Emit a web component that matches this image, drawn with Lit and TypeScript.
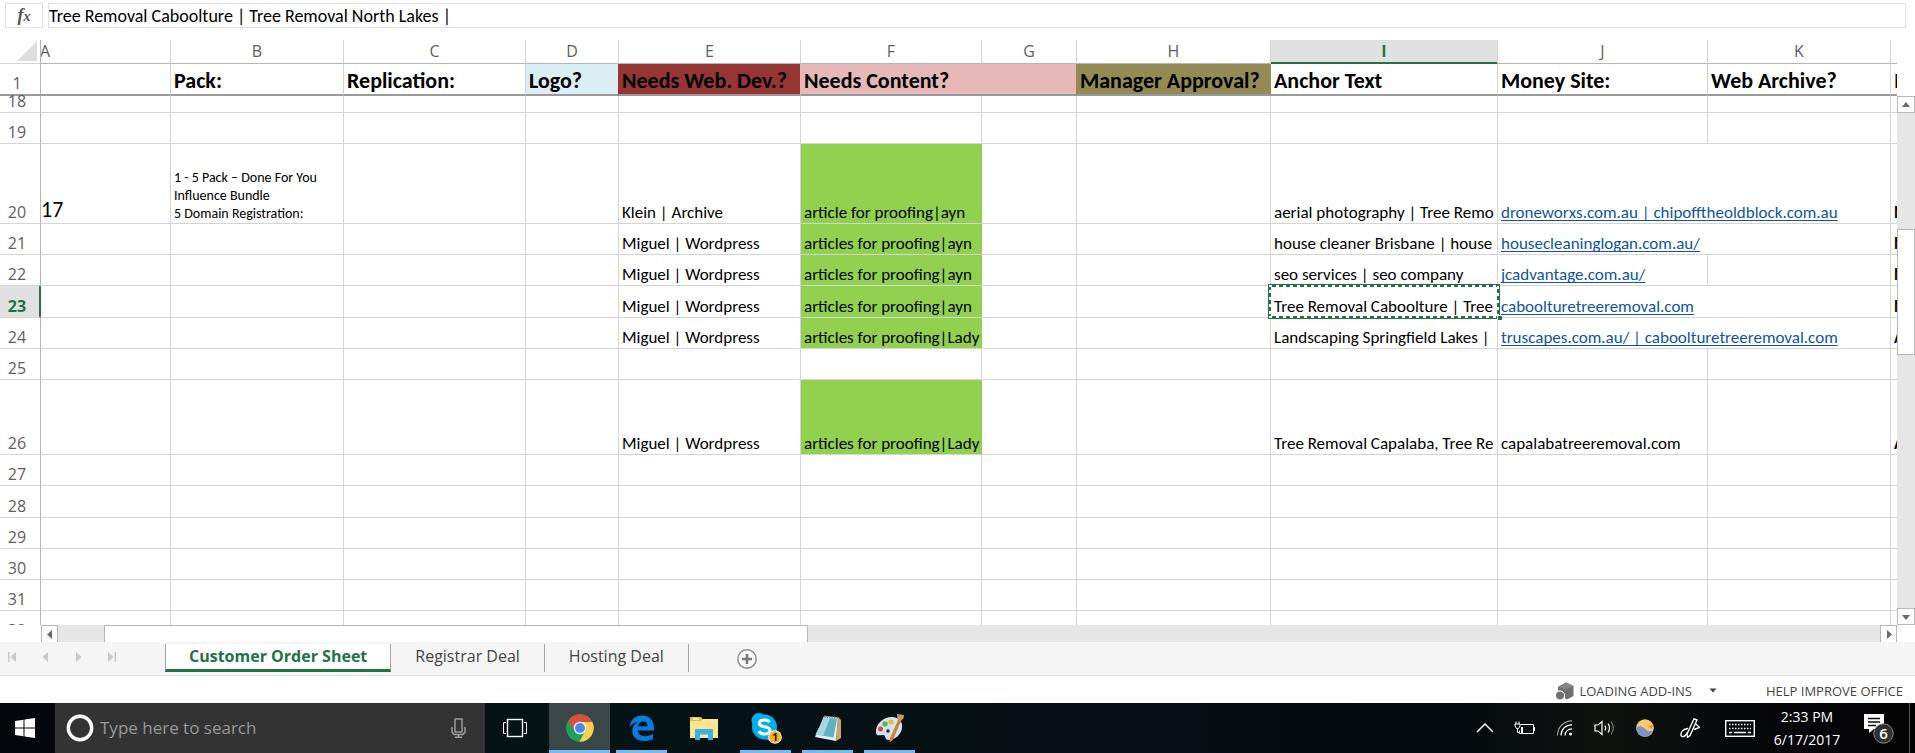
import { LitElement, html, css, nothing, svg } from "lit";
import { customElement, state } from "lit/decorators.js";
import { classMap } from "lit/directives/class-map.js";

interface Cell {
  text: string;
  fill?: string;
  link?: boolean;
  span?: number;
  small?: boolean;
  large?: boolean;
  bold?: boolean;
}

interface Row {
  n: number;
  height: number;
  cells: Record<string, Cell>;
}

const COLUMNS: { id: string; width: number }[] = [
  { id: "A", width: 130 },
  { id: "B", width: 173 },
  { id: "C", width: 182 },
  { id: "D", width: 93 },
  { id: "E", width: 182 },
  { id: "F", width: 181 },
  { id: "G", width: 95 },
  { id: "H", width: 194 },
  { id: "I", width: 227 },
  { id: "J", width: 210 },
  { id: "K", width: 183 },
  { id: "L", width: 183 },
];

const article = (text: string): Cell => ({ text, fill: "green" });
const miguel: Cell = { text: "Miguel | Wordpress" };

const ROWS: Row[] = [
  {
    n: 1,
    height: 32,
    cells: {
      B: { text: "Pack:" },
      C: { text: "Replication:" },
      D: { text: "Logo?", fill: "aqua" },
      E: { text: "Needs Web. Dev.?", fill: "red" },
      F: { text: "Needs Content?", fill: "pink", span: 2 },
      H: { text: "Manager Approval?", fill: "olive" },
      I: { text: "Anchor Text" },
      J: { text: "Money Site:" },
      K: { text: "Web Archive?" },
      L: { text: "I" },
    },
  },
  { n: 18, height: 17, cells: {} },
  { n: 19, height: 31, cells: {} },
  {
    n: 20,
    height: 80,
    cells: {
      A: { text: "17", large: true },
      B: { text: "1 - 5 Pack – Done For You\nInfluence Bundle\n5 Domain Registration:", small: true },
      E: { text: "Klein | Archive" },
      F: article("article for proofing|ayn"),
      I: { text: "aerial photography | Tree Remo" },
      J: { text: "droneworxs.com.au | chipofftheoldblock.com.au", link: true, span: 2 },
      L: { text: "N", bold: true },
    },
  },
  {
    n: 21,
    height: 31,
    cells: {
      E: miguel,
      F: article("articles for proofing|ayn"),
      I: { text: "house cleaner Brisbane | house" },
      J: { text: "housecleaninglogan.com.au/", link: true, span: 2 },
      L: { text: "N", bold: true },
    },
  },
  {
    n: 22,
    height: 31,
    cells: {
      E: miguel,
      F: article("articles for proofing|ayn"),
      I: { text: "seo services | seo company" },
      J: { text: "jcadvantage.com.au/", link: true },
      L: { text: "N", bold: true },
    },
  },
  {
    n: 23,
    height: 32,
    cells: {
      E: miguel,
      F: article("articles for proofing|ayn"),
      I: { text: "Tree Removal Caboolture | Tree" },
      J: { text: "caboolturetreeremoval.com", link: true, span: 2 },
      L: { text: "N", bold: true },
    },
  },
  {
    n: 24,
    height: 31,
    cells: {
      E: miguel,
      F: article("articles for proofing|Lady"),
      I: { text: "Landscaping Springfield Lakes |" },
      J: { text: "truscapes.com.au/ | caboolturetreeremoval.com", link: true, span: 2 },
      L: { text: "A", bold: true },
    },
  },
  { n: 25, height: 31, cells: {} },
  {
    n: 26,
    height: 75,
    cells: {
      E: miguel,
      F: article("articles for proofing|Lady"),
      I: { text: "Tree Removal Capalaba, Tree Re" },
      J: { text: "capalabatreeremoval.com" },
      L: { text: "A", bold: true },
    },
  },
  { n: 27, height: 31, cells: {} },
  { n: 28, height: 32, cells: {} },
  { n: 29, height: 31, cells: {} },
  { n: 30, height: 31, cells: {} },
  { n: 31, height: 31, cells: {} },
  { n: 32, height: 31, cells: {} },
];

@customElement("formula-bar")
export class FormulaBar extends LitElement {
  static styles = css`
    :host {
      display: flex;
      gap: 5px;
      padding: 3px 9px 12px 5px;
      background: #fff;
    }
    .fx {
      width: 38px;
      padding: 0;
      border: 1px solid #e1e1e1;
      background: #fff;
      color: #555;
      font: italic bold 18px/20px "Liberation Serif", serif;
    }
    .fx small {
      font-size: 14px;
    }
    .value {
      flex: 1;
      min-width: 0;
      height: 25px;
      box-sizing: border-box;
      padding: 0;
      border: 1px solid #e1e1e1;
      color: #000;
      font: 18px/22px Carlito, Calibri, Lato, sans-serif;
      outline: none;
    }
  `;
  render() {
    return html`
      <button class="fx" aria-label="Insert function">f<small>x</small></button>
      <input class="value" aria-label="Formula" value="Tree Removal Caboolture | Tree Removal North Lakes |" />
    `;
  }
}

@customElement("sheet-grid")
export class SheetGrid extends LitElement {
  static styles = css`
    :host {
      display: flex;
      min-height: 0;
      overflow: hidden;
      background: #fff;
    }
    .pane {
      flex: 1;
      min-width: 0;
      overflow: hidden;
    }
    table {
      width: 0;
      table-layout: fixed;
      border-collapse: separate;
      border-spacing: 0;
      font: 17px/20px Carlito, Calibri, Lato, sans-serif;
      color: #000;
    }
    .rowcol {
      width: 41px;
    }
    th,
    td {
      padding: 0;
      box-sizing: border-box;
      border-right: 1px solid #d4d4d4;
      border-bottom: 1px solid #d4d4d4;
      vertical-align: bottom;
      text-align: left;
      font-weight: normal;
    }
    thead th {
      height: 24px;
      border-bottom-color: #b5b5b5;
      text-align: center;
      vertical-align: middle;
      color: #5e5e5e;
      font: 16px/22px "Open Sans", "Noto Sans", sans-serif;
    }
    thead .first {
      text-align: left;
    }
    .letter {
      display: block;
      height: 23px;
      overflow: hidden;
    }
    .first .letter {
      text-indent: -1px;
    }
    thead .corner {
      border-bottom-color: #d4d4d4;
      border-right-color: #b5b5b5;
    }
    .corner svg {
      display: block;
      margin: 0 0 2px 17px;
    }
    thead .active {
      background: #e1e1e1;
      color: #217346;
      font-weight: bold;
      box-shadow: inset 0 -1px 0 #217346;
      border-bottom-color: #217346;
    }
    .num {
      border-right-color: #b5b5b5;
      color: #5e5e5e;
      font: 16px/22px "Open Sans", "Noto Sans", sans-serif;
    }
    .num .cell {
      justify-content: center;
      padding: 0 6px 0 0;
    }
    .num.active {
      background: #e1e1e1;
      color: #217346;
      font-weight: bold;
      border-right-color: #217346;
      box-shadow: inset -1px 0 0 #217346;
    }
    .cell {
      display: flex;
      align-items: flex-end;
      box-sizing: border-box;
      padding: 0 0 0 3px;
      white-space: pre;
    }
    .clip {
      overflow: hidden;
    }
    .frozen th,
    .frozen td {
      border-bottom: 2px solid #9a9a9a;
    }
    .frozen td {
      font-size: 22px;
      line-height: 26px;
      font-weight: bold;
    }
    .bold {
      font-weight: bold;
    }
    .large {
      font-size: 22px;
      line-height: 26px;
    }
    .large .cell {
      padding-left: 0;
    }
    .small {
      font-size: 14px;
      line-height: 18px;
    }
    .aqua {
      background: #daeef3;
      border-right-color: #963634;
    }
    .red {
      background: #963634;
      border-right-color: #e6b8b7;
    }
    .pink {
      background: #e6b8b7;
      border-right-color: #948a54;
    }
    .olive {
      background: #948a54;
      border-right-color: #948a54;
    }
    .green {
      background: #92d050;
      border-right-color: #92d050;
    }
    a {
      color: #10559c;
      text-decoration: underline;
      text-underline-offset: 2px;
      text-decoration-skip-ink: none;
    }
    .picked {
      position: relative;
    }
    .ants {
      position: absolute;
      inset: -2px -3px -2px -3px;
      border: 1px solid #217346;
      pointer-events: none;
    }
    .ants svg {
      position: absolute;
      inset: 0;
      width: 100%;
      height: 100%;
    }
    .handle {
      position: absolute;
      right: -3px;
      bottom: -2px;
      width: 4px;
      height: 4px;
      background: #217346;
      border-left: 1px solid #fff;
      border-top: 1px solid #fff;
    }
    .scroll {
      display: flex;
      flex-direction: column;
      width: 18px;
      margin-top: 56px;
      background: #e6e6e6;
    }
    .step {
      display: flex;
      align-items: center;
      justify-content: center;
      height: 17px;
      padding: 0;
      border: 1px solid #b8b8b8;
      background: #fff;
    }
    .before {
      flex: 116;
    }
    .thumb {
      flex: 125;
      border: 1px solid #b8b8b8;
      background: #fff;
    }
    .after {
      flex: 254;
    }
  `;

  @state() private row = 23;
  @state() private col = "I";

  private renderCell(row: Row, id: string, cell?: Cell) {
    const picked = row.n === this.row && id === this.col;
    const classes = {
      [cell?.fill ?? "plain"]: true,
      bold: !!cell?.bold,
      small: !!cell?.small,
      large: !!cell?.large,
      picked,
    };
    const inner = row.height - (row.n === 1 ? 2 : 1);
    return html`<td class=${classMap(classes)} colspan=${cell?.span ?? 1}>
      <div class="cell ${id === "I" || id === "L" ? "clip" : ""}" style="height:${inner}px">${cell
        ? cell.link
          ? html`<a href="#">${cell.text}</a>`
          : html`<span>${cell.text}</span>`
        : nothing}</div>
      ${picked
        ? html`<div class="ants">
            <svg aria-hidden="true">
              <rect x="0" y="0" width="100%" height="100%" fill="none" stroke="#217346" stroke-width="4" />
              <rect x="0" y="0" width="100%" height="100%" fill="none" stroke="#fff" stroke-width="4" stroke-dasharray="3 4" />
            </svg>
            <div class="handle"></div>
          </div>`
        : nothing}
    </td>`;
  }

  private renderRow(row: Row) {
    const cells = [];
    for (let i = 0; i < COLUMNS.length; i++) {
      const cell = row.cells[COLUMNS[i].id];
      cells.push(this.renderCell(row, COLUMNS[i].id, cell));
      i += (cell?.span ?? 1) - 1;
    }
    const inner = row.height - (row.n === 1 ? 2 : 1);
    return html`<tr class=${row.n === 1 ? "frozen" : ""}>
      <th class="num ${row.n === this.row ? "active" : ""}" scope="row">
        <div class="cell" style="height:${inner}px">${row.n}</div>
      </th>
      ${cells}
    </tr>`;
  }

  render() {
    return html`
      <div class="pane">
        <table>
          <colgroup>
            <col class="rowcol" />
            ${COLUMNS.map((c) => html`<col style="width:${c.width}px" />`)}
          </colgroup>
          <thead>
            <tr>
              <th class="corner">
                <svg width="20" height="20" aria-hidden="true"><path d="M20 0V20H0Z" fill="#dedede" /></svg>
              </th>
              ${COLUMNS.map(
                (c, i) => html`<th class="${i === 0 ? "first" : ""} ${c.id === this.col ? "active" : ""}" scope="col">
                  <span class="letter">${c.id}</span>
                </th>`
              )}
            </tr>
          </thead>
          <tbody>
            ${ROWS.map((r) => this.renderRow(r))}
          </tbody>
        </table>
      </div>
      <div class="scroll">
        <button class="step" aria-label="Scroll up">
          <svg width="8" height="6"><path d="M4 0L8 5H0Z" fill="#6a6a6a" /></svg>
        </button>
        <div class="before"></div>
        <div class="thumb"></div>
        <div class="after"></div>
        <button class="step" aria-label="Scroll down">
          <svg width="8" height="6"><path d="M4 6L8 1H0Z" fill="#6a6a6a" /></svg>
        </button>
      </div>
    `;
  }
}

@customElement("sheet-footer")
export class SheetFooter extends LitElement {
  static styles = css`
    :host {
      display: block;
      font: 16px/22px "Open Sans", "Noto Sans", sans-serif;
      color: #444;
    }
    button {
      padding: 0;
      border: 0;
      background: none;
      color: inherit;
      font: inherit;
    }
    .hscroll {
      display: flex;
      box-sizing: border-box;
      height: 17px;
      margin: 0 18px 0 41px;
      background: #e6e6e6;
    }
    .hscroll .step {
      display: flex;
      align-items: center;
      justify-content: center;
      width: 17px;
      border: 1px solid #b8b8b8;
      border-bottom: 0;
      background: #fff;
    }
    .before {
      flex: 46;
    }
    .thumb {
      flex: 703;
      border: 1px solid #b8b8b8;
      border-bottom: 0;
      background: #fff;
    }
    .after {
      flex: 1073;
    }
    .tabs {
      display: flex;
      height: 33px;
      background: #f5f5f5;
      border-bottom: 1px solid #dcdcdc;
    }
    .arrows {
      display: flex;
      gap: 24px;
      width: 157px;
      padding: 0 0 3px 8px;
      box-sizing: content-box;
    }
    .arrows button {
      display: flex;
      align-items: center;
    }
    .tab {
      height: 28px;
      margin-top: 2px;
      padding: 0 24px 4px;
      border-right: 1px solid #a6a6a6;
    }
    .tab.current {
      padding: 0 23px 1px;
      border-left: 1px solid #a6a6a6;
      border-bottom: 3px solid #217346;
      background: #fff;
      color: #217346;
      font-weight: bold;
    }
    .add {
      display: flex;
      align-items: center;
      margin-left: 48px;
    }
    .status {
      display: flex;
      align-items: center;
      justify-content: flex-end;
      height: 27px;
      padding: 2px 12px 0 0;
      box-sizing: border-box;
      background: #fff;
      font-size: 13px;
      line-height: 20px;
    }
    .addins {
      display: flex;
      align-items: center;
      gap: 5px;
      margin-right: 49px;
    }
    .addins .caret {
      margin-left: 12px;
    }
  `;

  @state() private current = "Customer Order Sheet";

  render() {
    const arrow = (label: string, d: string) =>
      html`<button aria-label=${label}><svg width="9" height="10"><path d=${d} fill="#c9c9c9" /></svg></button>`;
    return html`
      <div class="hscroll">
        <button class="step" aria-label="Scroll left"><svg width="6" height="9"><path d="M5 0V9L0 4.500Z" fill="#6a6a6a" /></svg></button>
        <div class="before"></div>
        <div class="thumb"></div>
        <div class="after"></div>
        <button class="step" aria-label="Scroll right"><svg width="6" height="9"><path d="M1 0V9L6 4.500Z" fill="#6a6a6a" /></svg></button>
      </div>
      <div class="tabs">
        <div class="arrows">
          ${arrow("First sheet", "M0 0H1.500V10H0ZM8 0V10L2.500 5Z")}
          ${arrow("Previous sheet", "M7 0V10L1.500 5Z")}
          ${arrow("Next sheet", "M2 0V10L7.500 5Z")}
          ${arrow("Last sheet", "M7.500 0H9V10H7.500ZM1 0V10L6.500 5Z")}
        </div>
        ${["Customer Order Sheet", "Registrar Deal", "Hosting Deal"].map(
          (t) => html`<button class="tab ${t === this.current ? "current" : ""}" @click=${() => (this.current = t)}>${t}</button>`
        )}
        <button class="add" aria-label="New sheet">
          <svg width="20" height="20" fill="none" stroke="#8a8a8a">
            <circle cx="10" cy="10" r="9.200" fill="#fafafa" stroke-width="1.400" />
            <path d="M10 5V15M5 10H15" stroke="#777" stroke-width="2.600" />
          </svg>
        </button>
      </div>
      <div class="status">
        <button class="addins">
          <svg width="18" height="18" fill="#6e6e6e">
            <path d="M2 5L10 0.500L17.500 4V14L11 17.500L8.500 16A5.500 5.500 0 0 0 3 8.500L2 8.700Z" />
            <path d="M10 0.500L17.500 4L10 7.500L2.500 4.500Z" fill="#858585" />
            <circle cx="4" cy="13.500" r="4.500" stroke="#fff" />
          </svg>
          LOADING ADD-INS
          <svg class="caret" width="8" height="5"><path d="M0.500 0.500H7.500L4 4.500Z" fill="#444" /></svg>
        </button>
        <button>HELP IMPROVE OFFICE</button>
      </div>
    `;
  }
}

const icons = {
  taskView: svg`<svg width="26" height="20" fill="none" stroke="#fff"><rect x="5.500" y="1.500" width="15" height="17" stroke-width="1.400"/><path d="M4 4.500H1.500V15.500H4M22 4.500H24.500V15.500H22"/></svg>`,
  chrome: svg`<svg width="28" height="28" viewBox="0 0 28 28"><circle cx="14" cy="14" r="13.800" fill="#1fa15d"/><path d="M14 14L2 7.200A13.800 13.800 0 0 1 26 7.200L26.200 8H14Z" fill="#df4b3f"/><path d="M14 8H26.300A13.800 13.800 0 0 1 13.500 27.800L19.500 16.500Z" fill="#fdd04b"/><path d="M2.300 6.800L8.500 17L14 14L14 8Z" fill="#df4b3f"/><path d="M2.300 6.800L8.600 17.200L13 20L8 26A13.800 13.800 0 0 1 2.300 6.800Z" fill="#1fa15d"/><circle cx="14" cy="14" r="6.300" fill="#f3f3f3"/><circle cx="14" cy="14" r="4.900" fill="#4b87f0"/></svg>`,
  edge: svg`<svg width="26" height="28" viewBox="0 0 26 28"><path d="M0.500 13C1.500 5.500 6.500 1.500 13 1.500C20.500 1.500 25 7 25 13.500V16.500H8.800C9 20 12 22.200 16 22.200C19 22.200 21.800 21.300 24 20V25C21.500 26.400 18.500 27 15 27C8 27 3.300 23 3.300 17C3.300 13 5.300 9.800 9 8C5.500 8.200 2.500 10 0.500 13ZM9 12.300H18.600C18.600 9.500 17 7.500 14 7.500C11.400 7.500 9.500 9.500 9 12.300Z" fill="#0a7ade"/></svg>`,
  folder: svg`<svg width="28" height="24" viewBox="0 0 28 24"><path d="M0 1H11L13 3.500H27V21H0Z" fill="#f0b93a"/><rect x="3" y="2" width="6" height="1.600" fill="#fff"/><path d="M0 5H11L13 3H28V22H0Z" fill="#ffe491"/><path d="M5 24V13H23V24H18V18.500H10V24Z" fill="#35b3ea"/></svg>`,
  skype: svg`<svg width="32" height="32" viewBox="0 0 32 32"><g fill="#00aff0"><circle cx="9" cy="8.500" r="7.500"/><circle cx="20" cy="21" r="7.500"/><circle cx="14.500" cy="15" r="12.500"/></g><path d="M19.500 10.200C18.500 8.500 16.800 8 14.500 8C11.500 8 9.300 9.300 9.300 11.500C9.300 16 19.900 13.500 19.900 18.200C19.900 20.500 17.500 22 14.700 22C12 22 10 21.300 8.900 19.300" fill="none" stroke="#fff" stroke-width="3.200"/><circle cx="25" cy="25" r="6.800" fill="#fff"/><circle cx="25" cy="25" r="5.900" fill="#fbb01b"/><text x="25" y="28.500" text-anchor="middle" font-family="Open Sans" font-size="10" font-weight="bold" fill="#111">1</text></svg>`,
  notepad: svg`<svg width="28" height="28" viewBox="0 0 28 28"><path d="M24 3L27 6V24L22 27Z" fill="#c9a765"/><path d="M10 2L24 3.500L22 27L1 23Z" fill="#e8eef0"/><path d="M10.500 3.500L23 5L19.500 23.500L1.500 20.500Z" fill="#5fb2c4"/><path d="M10.500 3.500L16 4.200L9 22L1.500 20.500Z" fill="#a4d7df"/><path d="M10 2.500L24 4" stroke="#8a8a8a" stroke-width="2" stroke-dasharray="1.500 1"/></svg>`,
  paint: svg`<svg width="30" height="30" viewBox="0 0 30 30"><path d="M1 20C0 11 8 4 17 4C24 4 28 9 27 15C26 22 20 27 13 27C10 27 11 23 8.500 22C6 21.500 2 24 1 20Z" fill="#cfe3f3"/><circle cx="5.500" cy="16" r="2.500" fill="#e1473a"/><circle cx="10" cy="11" r="2.700" fill="#5fb648"/><circle cx="16" cy="9" r="2.600" fill="#f2b52c"/><circle cx="13" cy="18" r="1.800" fill="#1d2a33"/><path d="M24 5L26.500 7L18 27L14.500 29.500L15 25Z" fill="#d5802f"/><path d="M22 1L29 2L28.500 5.500L25.500 8L22.500 6Z" fill="#c79b6b"/></svg>`,
  chevron: svg`<svg width="18" height="10" fill="none" stroke="#fff" stroke-width="1.500"><path d="M1 9L9 1L17 9"/></svg>`,
  battery: svg`<svg width="22" height="14" viewBox="0 0 22 14" fill="none" stroke="#fff"><path d="M6.500 3.500H19.500V12.500H5.500V9.500M20.500 6V10"/><path d="M1 3H6V5L4.500 7.500H2.500L1 5ZM2 0.500V3M5 0.500V3M3.500 7.500V11.500H5"/><rect x="7" y="6" width="2" height="6" fill="#fff" stroke="none"/></svg>`,
  wifi: svg`<svg width="18" height="18" viewBox="0 0 18 18" fill="none" stroke="#fff" stroke-width="1.200"><g stroke="#9a9a9a"><path d="M1.500 16.500C1.500 8 8 1.800 16 1.800"/></g><path d="M5 16.500C5 10.500 9.500 5.800 16 5.800M9 16.500C9 12.500 12 9.800 16 9.800"/><circle cx="14.500" cy="15" r="1.500" fill="#fff" stroke="none"/></svg>`,
  sound: svg`<svg width="22" height="18" viewBox="0 0 22 18" fill="none" stroke="#fff" stroke-width="1.200"><path d="M1 6H4L8 2.500V15.500L4 12H1Z"/><path d="M11 6.500Q12.500 9 11 11.500M14 4.500Q17 9 14 13.500"/><path d="M17 2.500Q21.500 9 17 15.500" stroke="#777"/></svg>`,
  ball: svg`<svg width="18" height="18" viewBox="0 0 18 18"><circle cx="9" cy="9" r="8.800" fill="#f8c873"/><path d="M0.200 9C4 5 8 9 11 11.500C13.500 13 16 12 17.400 11.500A8.800 8.800 0 0 1 0.200 9Z" fill="#7f92c6"/><path d="M12 7L17 6L16 10Z" fill="#ef8e35"/></svg>`,
  pen: svg`<svg width="20" height="20" viewBox="0 0 20 20" fill="none" stroke="#fff" stroke-width="1.400"><path d="M14 0.800L17 2L10 17.500L7.500 19.500L7 16Z"/><path d="M16 6L19.500 9.500L14 11.500M8 10.500C3 11 0.500 14 1 17.500C3 20 6 18 7.500 14"/></svg>`,
  keyboard: svg`<svg width="30" height="17" viewBox="0 0 30 17" fill="none" stroke="#fff"><rect x="0.700" y="0.700" width="28.600" height="15.600" stroke-width="1.400"/><path d="M4 4.500H26M4 8.500H26" stroke-dasharray="1.500 1.500" stroke-width="1.400"/><path d="M4 12.500H7M9 12.500H21M23 12.500H26" stroke-width="1.400"/></svg>`,
  note: svg`<svg width="30" height="32" viewBox="0 0 30 32"><path d="M0 1H20V16H10L5 20V16H0Z" fill="#fff"/><path d="M4 5.500H16M4 9H16M4 12.500H12" stroke="#111" stroke-width="1.300"/><circle cx="19.500" cy="20.500" r="9.700" fill="#303030" stroke="#8c8c8c"/><text x="19.500" y="26" text-anchor="middle" font-family="Open Sans" font-size="15" font-weight="600" fill="#fff">6</text></svg>`,
};

@customElement("task-bar")
export class TaskBar extends LitElement {
  static styles = css`
    :host {
      display: flex;
      height: 50px;
      background: linear-gradient(90deg, #02060a, #061416 30%, #050e12 60%, #040a0e 76%, #10120f 84%, #07080a 90%, #030304);
      color: #fff;
      font: 14px/23px "Open Sans", "Noto Sans", sans-serif;
    }
    button {
      display: flex;
      align-items: center;
      justify-content: center;
      padding: 0;
      border: 0;
      background: none;
      color: inherit;
      font: inherit;
    }
    .start {
      width: 55px;
      padding-right: 5px;
    }
    .search {
      display: flex;
      align-items: center;
      box-sizing: border-box;
      width: 430px;
      padding: 0 19px 0 11px;
      background: #333;
    }
    .search input {
      flex: 1;
      min-width: 0;
      margin-left: 6px;
      padding: 0;
      border: 0;
      outline: none;
      background: none;
      color: #fff;
      font: 17px/24px "Open Sans", "Noto Sans", sans-serif;
    }
    .search input::placeholder {
      color: #999;
    }
    .view {
      width: 60px;
      margin-right: 4px;
    }
    .app {
      position: relative;
      width: 61px;
      margin-right: 1px;
    }
    .app.front {
      background: #3a4648;
    }
    .app.open::after {
      content: "";
      position: absolute;
      inset: auto 5px 0 5px;
      height: 3px;
      background: #76b9ed;
    }
    .app.front::after {
      inset: auto 0 0 0;
    }
    .tray {
      display: flex;
      margin-left: auto;
    }
    .icon {
      width: 40px;
    }
    .icon.wide {
      width: 50px;
    }
    .clock {
      flex-direction: column;
      width: 84px;
    }
    .notes {
      width: 60px;
      padding-top: 2px;
    }
    .desktop {
      width: 6px;
      border-left: 1px solid #555;
    }
  `;
  render() {
    return html`
      <button class="start" aria-label="Start">
        <svg width="20" height="20" fill="#fff">
          <path d="M0 3L8.500 1.800V9.500H0ZM9.500 1.600L20 0V9.500H9.500ZM0 10.500H8.500V18.200L0 17ZM9.500 10.500H20V20L9.500 18.400Z" />
        </svg>
      </button>
      <label class="search">
        <svg width="28" height="28"><circle cx="14" cy="14" r="11.700" fill="none" stroke="#fff" stroke-width="3.400" /></svg>
        <input aria-label="Search" placeholder="Type here to search" />
        <svg width="15" height="20" fill="none" stroke="#a0a0a0" stroke-width="1.400">
          <rect x="4" y="1" width="7" height="13" />
          <path d="M1 9V14L3 16.500H12L14 14V9M7.500 16.500V19.300M4 19.300H11" />
        </svg>
      </label>
      <button class="view" aria-label="Task view">${icons.taskView}</button>
      <button class="app open front" aria-label="Chrome">${icons.chrome}</button>
      <button class="app open" aria-label="Edge">${icons.edge}</button>
      <button class="app" aria-label="File Explorer">${icons.folder}</button>
      <button class="app open" aria-label="Skype">${icons.skype}</button>
      <button class="app open" aria-label="Notepad">${icons.notepad}</button>
      <button class="app open" aria-label="Paint">${icons.paint}</button>
      <div class="tray">
        <button class="icon" aria-label="Show hidden icons">${icons.chevron}</button>
        <button class="icon" aria-label="Battery">${icons.battery}</button>
        <button class="icon" aria-label="Network">${icons.wifi}</button>
        <button class="icon" aria-label="Volume">${icons.sound}</button>
        <button class="icon" aria-label="Weather">${icons.ball}</button>
        <button class="icon wide" aria-label="Ink workspace">${icons.pen}</button>
        <button class="icon wide" aria-label="Keyboard">${icons.keyboard}</button>
        <button class="clock"><span>2:33 PM</span><span>6/17/2017</span></button>
        <button class="notes" aria-label="Notifications">${icons.note}</button>
        <button class="desktop" aria-label="Show desktop"></button>
      </div>
    `;
  }
}

@customElement("app-root")
export class AppRoot extends LitElement {
  static styles = css`
    :host {
      display: flex;
      flex-direction: column;
      height: 100vh;
      overflow: hidden;
      background: #fff;
    }
    sheet-grid {
      flex: 1;
    }
  `;
  render() {
    return html`
      <formula-bar></formula-bar>
      <sheet-grid></sheet-grid>
      <sheet-footer></sheet-footer>
      <task-bar></task-bar>
    `;
  }
}
